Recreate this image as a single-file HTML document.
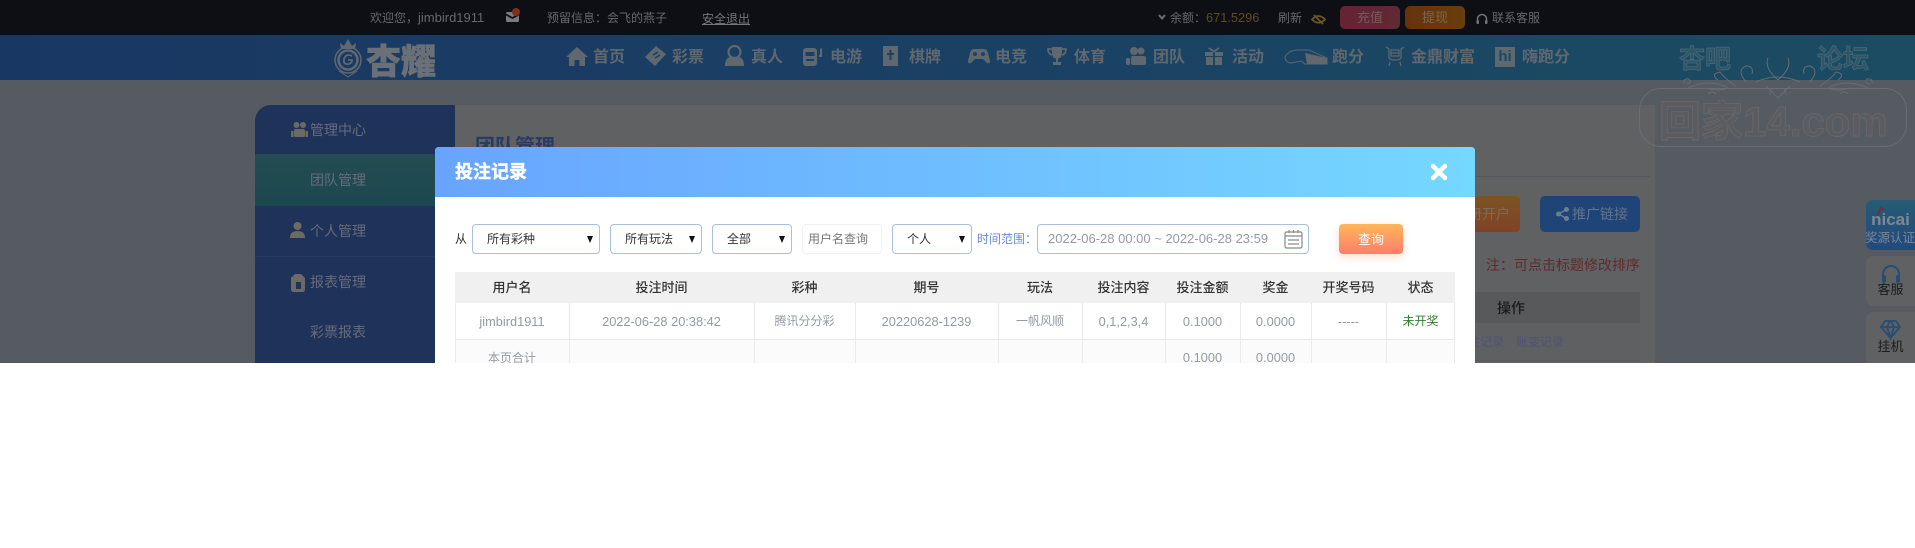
<!DOCTYPE html>
<html lang="zh"><head><meta charset="utf-8"><title>投注记录</title>
<style>
html,body{margin:0;padding:0;background:#fff}
#v{position:relative;width:1915px;height:548px;overflow:hidden;background:#fff;font-family:"Liberation Sans","Noto Sans CJK SC",sans-serif}
#c{position:absolute;left:0;top:0;width:1915px;height:363px;overflow:hidden;background:#565a61}
.a{position:absolute;white-space:nowrap}
.t{position:absolute;white-space:nowrap;line-height:20px}
svg{position:absolute;overflow:visible}
.n{position:absolute;top:46px;font-size:16px;font-weight:700;line-height:24px;color:#5f676f;white-space:nowrap}
.s{position:absolute;top:224px;height:28px;border:1px solid #a9bfdf;border-radius:4px;background:#fff;font-size:12px;line-height:28px;color:#333}
.ar{position:absolute;top:236px;width:0;height:0;border-left:3.5px solid transparent;border-right:3.5px solid transparent;border-top:7px solid #111}
.th{position:absolute;top:272px;height:31px;line-height:31px;text-align:center;font-size:13px;font-weight:500;color:#333}
.td{position:absolute;top:303px;height:36px;line-height:37px;text-align:center;font-size:12px;color:#969aa3}
.td2{position:absolute;top:340px;height:36px;line-height:36px;text-align:center;font-size:12px;color:#969aa3}
.l{font-size:12.8px}
.vl{position:absolute;top:303px;height:60px;width:1px;background:#e8eaee}
.m{position:absolute;font-size:14px;color:#666c7a;text-align:left}
</style></head><body><div id="v"><div id="c">
<!-- top bar -->
<div class="a" style="left:0;top:0;width:1915px;height:35px;background:#0d0f15"></div>
<div class="t" style="left:370px;top:8px;font-size:12px;color:#66686d">欢迎您，<span style="font-size:13px">jimbird1911</span></div>
<svg style="left:506px;top:12px" width="13" height="10" viewBox="0 0 13 10"><path d="M0 1.500 Q0 0 1.500 0H11.500Q13 0 13 1.500L6.500 5ZM0 3.500L6.500 7L13 3.500V8.500Q13 10 11.500 10H1.500Q0 10 0 8.500Z" fill="#7a7b80"/></svg>
<div class="a" style="left:512px;top:8px;width:8px;height:8px;border-radius:50%;background:#803019"></div>
<div class="t" style="left:547px;top:8px;font-size:12px;color:#66686d">预留信息：会飞的燕子</div>
<div class="t" style="left:702px;top:9px;font-size:12px;color:#76777c;text-decoration:underline">安全退出</div>
<svg style="left:1158px;top:14px" width="8" height="6" viewBox="0 0 8 6"><path d="M1 1L4 4.500L7 1" fill="none" stroke="#6c6e73" stroke-width="2"/></svg>
<div class="t" style="left:1170px;top:8px;font-size:12px;color:#66686d">余额：</div>
<div class="t l" style="left:1206px;top:8px;color:#5e4b26">671.5296</div>
<div class="t" style="left:1278px;top:8px;font-size:12px;color:#66686d">刷新</div>
<svg style="left:1311px;top:14px" width="15" height="11" viewBox="0 0 15 11"><path d="M1 5.500Q7.500-1.500 14 5.500Q7.500 12 1 5.500ZM3 1L12 10" fill="none" stroke="#6c5722" stroke-width="1.800"/></svg>
<div class="a" style="left:1340px;top:6px;width:60px;height:23px;border-radius:5px;background:linear-gradient(90deg,#652334,#5f2a33);font-size:13px;line-height:24px;text-align:center;color:#745a60">充值</div>
<div class="a" style="left:1405px;top:6px;width:60px;height:23px;border-radius:5px;background:linear-gradient(90deg,#67320c,#683e0d);font-size:13px;line-height:24px;text-align:center;color:#7c6650">提现</div>
<svg style="left:1476px;top:13px" width="12" height="12" viewBox="0 0 12 12"><path d="M1.500 10V6A4.500 4.500 0 0 1 10.500 6V10" fill="none" stroke="#727378" stroke-width="1.500"/><rect x="0.500" y="7" width="2.500" height="4" rx="1" fill="#727378"/><rect x="9" y="7" width="2.500" height="4" rx="1" fill="#727378"/></svg>
<div class="t" style="left:1492px;top:8px;font-size:12px;color:#66686d">联系客服</div>
<!-- nav -->
<div class="a" style="left:0;top:35px;width:1915px;height:45px;background:linear-gradient(90deg,#193763 0%,#1a3f64 45%,#1b4c62 100%)"></div>
<svg style="left:333px;top:38px" width="30" height="40" viewBox="0 0 30 40"><path d="M8 11L7 5L11 8L15 1L19 8L23 5L22 11Z" fill="#62686f"/><circle cx="15" cy="22" r="13" fill="none" stroke="#62686f" stroke-width="1.500"/><circle cx="15" cy="22" r="9.500" fill="none" stroke="#62686f" stroke-width="2.500"/><path d="M19 18Q13 15 11 21Q10 27 16 26Q19 25 19 22H15" fill="none" stroke="#62686f" stroke-width="1.800"/><path d="M6 33L15 39L24 33" fill="none" stroke="#62686f" stroke-width="1"/></svg>
<div class="a" style="left:366px;top:40px;font-size:35px;line-height:40px;font-weight:900;color:#6a7076;font-family:'Noto Sans CJK SC',sans-serif;-webkit-text-stroke:.6px #6a7076">杏耀</div>
<svg style="left:566px;top:47px" width="22" height="19" viewBox="0 0 22 19"><path d="M11 0L22 10H19V19H13.500V13H8.500V19H3V10H0Z" fill="#5f676f"/></svg><div class="n" style="left:593px">首页</div>
<svg style="left:645px;top:46px" width="21" height="20" viewBox="0 0 21 20"><path d="M11 0L21 8L10 20L0 11Z" fill="#5f676f"/><path d="M8 9L13 6M10 12L15 9" stroke="#1a3c64" stroke-width="1.500"/></svg><div class="n" style="left:672px">彩票</div>
<svg style="left:724px;top:45px" width="21" height="21" viewBox="0 0 21 21"><circle cx="10.500" cy="7" r="6" fill="none" stroke="#5f676f" stroke-width="2.200"/><path d="M1 21Q1 13 6 12Q10.500 16 15 12Q20 13 20 21Z" fill="#5f676f"/></svg><div class="n" style="left:751px">真人</div>
<svg style="left:803px;top:47px" width="20" height="19" viewBox="0 0 20 19"><rect x="0" y="1" width="14" height="18" rx="3" fill="#5f676f"/><rect x="2.500" y="5" width="9" height="4" fill="#1a4064"/><rect x="3" y="12" width="8" height="2" fill="#1a4064"/><path d="M16 9H18V1.500" fill="none" stroke="#5f676f" stroke-width="2"/></svg><div class="n" style="left:830px">电游</div>
<svg style="left:883px;top:46px" width="15" height="20" viewBox="0 0 15 20"><rect width="15" height="20" fill="#5f676f"/><path d="M7.500 4V14M4 8H11" stroke="#1a4264" stroke-width="2"/></svg><div class="n" style="left:909px">棋牌</div>
<svg style="left:968px;top:49px" width="22" height="15" viewBox="0 0 22 15"><path d="M6 0H16Q19 0 20 4L22 12Q22 15 19 14L15 10H7L3 14Q0 15 0 12L2 4Q3 0 6 0Z" fill="#5f676f"/><circle cx="7" cy="5" r="2" fill="#1a4364"/><circle cx="15" cy="5" r="2" fill="#1a4364"/></svg><div class="n" style="left:995px">电竞</div>
<svg style="left:1047px;top:47px" width="20" height="18" viewBox="0 0 20 18"><path d="M5 0H15V6Q15 11 11 11.500V15H14V18H6V15H9V11.500Q5 11 5 6Z" fill="#5f676f"/><path d="M5 2H1Q1 7 5 8M15 2H19Q19 7 15 8" fill="none" stroke="#5f676f" stroke-width="1.800"/></svg><div class="n" style="left:1074px">体育</div>
<svg style="left:1126px;top:47px" width="21" height="18" viewBox="0 0 21 18"><circle cx="8" cy="4" r="4" fill="#5f676f"/><circle cx="15" cy="4" r="3.500" fill="#5f676f"/><rect x="5" y="9" width="15" height="9" rx="2" fill="#5f676f"/><rect x="0" y="11" width="4" height="7" rx="1.500" fill="#5f676f"/></svg><div class="n" style="left:1153px">团队</div>
<svg style="left:1205px;top:48px" width="18" height="17" viewBox="0 0 18 17"><rect y="4" width="18" height="4" fill="#5f676f"/><rect x="1" y="9" width="16" height="8" fill="#5f676f"/><path d="M4 0L9 3.500L14 0" fill="none" stroke="#5f676f" stroke-width="1.800"/><rect x="8" y="4" width="2" height="13" fill="#1b4763"/></svg><div class="n" style="left:1232px">活动</div>
<svg style="left:1283px;top:49px" width="44" height="16" viewBox="0 0 44 16"><path d="M2 8Q6 1 15 1H26L44 9V15H22L18 12L8 14Q2 13 2 8Z" fill="none" stroke="#50626d" stroke-width="1.200"/><path d="M22 4L44 9V15H24Z" fill="#62676d"/></svg><div class="n" style="left:1332px">跑分</div>
<svg style="left:1385px;top:47px" width="20" height="19" viewBox="0 0 20 19"><path d="M1 0L4 2V10Q4 13 10 13Q16 13 16 10V2L19 0M6 3H14V9H6ZM6 6H14M5 15L4 19M15 15L16 19" fill="none" stroke="#5f676f" stroke-width="1.300"/></svg><div class="n" style="left:1411px">金鼎财富</div>
<div class="a" style="left:1495px;top:47px;width:20px;height:20px;background:#5f676f;color:#1b4a62;font-size:15px;font-weight:700;line-height:20px;text-align:center">hi</div><div class="n" style="left:1522px">嗨跑分</div>
<!-- main -->
<div class="a" style="left:455px;top:105px;width:1200px;height:258px;background:#606163"></div>
<div class="a" style="left:1475px;top:176px;width:175px;height:1px;background:#55575b"></div>
<div class="a" style="left:255px;top:105px;width:200px;height:258px;background:#1f3259;border-radius:16px 0 0 0"></div>
<div class="a" style="left:255px;top:154px;width:200px;height:52px;background:linear-gradient(180deg,#234c50,#1c4851)"></div>
<div class="a" style="left:255px;top:256px;width:200px;height:1px;background:#263a62"></div>
<svg style="left:291px;top:122px" width="17" height="15" viewBox="0 0 17 15"><circle cx="5.500" cy="3" r="3" fill="#6c6a65"/><circle cx="12" cy="3" r="3" fill="#6c6a65"/><rect x="3" y="7" width="11" height="8" rx="1.500" fill="#6c6a65"/><rect x="0" y="9" width="2.500" height="6" fill="#6c6a65"/><rect x="14.500" y="9" width="2.500" height="6" fill="#6c6a65"/></svg>
<div class="t m" style="left:310px;top:120px">管理中心</div>
<div class="t m" style="left:310px;top:170px">团队管理</div>
<svg style="left:290px;top:222px" width="15" height="16" viewBox="0 0 15 16"><circle cx="7.500" cy="4" r="4" fill="#6c6a65"/><path d="M0 16Q0 9 7.500 9Q15 9 15 16Z" fill="#6c6a65"/></svg>
<div class="t m" style="left:310px;top:221px">个人管理</div>
<svg style="left:291px;top:274px" width="14" height="18" viewBox="0 0 14 18"><path d="M4 0H10L14 4V15Q14 18 11 18H3Q0 18 0 15V4Z" fill="#6c6a65"/><rect x="5" y="8" width="5" height="7" fill="#1f3259"/></svg>
<div class="t m" style="left:310px;top:272px">报表管理</div>
<div class="t m" style="left:310px;top:322px">彩票报表</div>
<div class="a" style="left:475px;top:134px;font-size:20px;line-height:26px;font-weight:700;color:#283a66">团队管理</div>
<div class="a" style="left:1465px;top:196px;width:55px;height:36px;border-radius:4px;background:linear-gradient(180deg,#7d5424,#804226);font-size:14px;line-height:36px;color:#776b62;text-align:right;padding-right:10px;box-sizing:border-box">册开户</div>
<div class="a" style="left:1540px;top:196px;width:100px;height:36px;border-radius:5px;background:#1f4578;font-size:14px;line-height:36px;color:#647388;padding-left:32px;box-sizing:border-box">推广链接</div>
<svg style="left:1556px;top:207px" width="13" height="14" viewBox="0 0 13 14"><circle cx="2.500" cy="7" r="2.500" fill="#6e7d92"/><circle cx="10.500" cy="2.500" r="2.500" fill="#6e7d92"/><circle cx="10.500" cy="11.500" r="2.500" fill="#6e7d92"/><path d="M2.500 7L10.500 2.500M2.500 7L10.500 11.500" stroke="#6e7d92" stroke-width="1.300"/></svg>
<div class="t" style="left:1486px;top:255px;font-size:14px;color:#5e2b2d">注：可点击标题修改排序</div>
<div class="a" style="left:1475px;top:292px;width:165px;height:31px;background:#58595b"></div>
<div class="a" style="left:1475px;top:323px;width:165px;height:37px;background:#5f6062;border-bottom:1px solid #58595b"></div>
<div class="t" style="left:1497px;top:298px;font-size:14px;font-weight:500;color:#1a1a1c">操作</div>
<div class="t" style="left:1468px;top:332px;font-size:12px;color:#4d5475">注记录</div>
<div class="t" style="left:1516px;top:332px;font-size:12px;color:#4d5475">账变记录</div>
<!-- watermark -->
<div class="a" style="left:1679px;top:42px;font-size:26px;line-height:34px;font-weight:700;color:#2f5668;-webkit-text-stroke:.7px #4a6a78">杏吧</div>
<div class="a" style="left:1817px;top:42px;font-size:26px;line-height:34px;font-weight:700;color:#2f5668;-webkit-text-stroke:.7px #4a6a78">论坛</div>
<svg style="left:1680px;top:58px" width="200" height="44" viewBox="0 0 200 44" fill="none" stroke="#666e74" stroke-width="1"><path d="M4 26Q3 20 9 21Q12 25 7 26M8 30Q30 20 48 30Q38 34 26 30M192 26Q193 20 187 21Q184 25 189 26M188 30Q166 20 148 30Q158 34 170 30M38 22Q30 16 40 14Q44 20 56 28M158 22Q166 16 156 14Q152 20 140 28M66 24Q56 12 66 8Q74 8 72 16M130 24Q140 12 130 8Q122 8 124 16M98 22Q84 10 88 0M98 22Q112 10 108 0M76 24Q98 14 120 24M86 28L98 40L110 28M92 30L90 37M104 30L106 37M28 36Q32 32 36 36M168 36Q164 32 160 36"/></svg>
<div class="a" style="left:1639px;top:88px;width:266px;height:57px;border:1.500px solid #6a6d72;border-radius:22px"></div>
<div class="a" style="left:1659px;top:97px;font-size:42px;line-height:50px;font-weight:700;color:#5a5c60;-webkit-text-stroke:.8px #68696c">回家14.com</div>
<!-- floats -->
<div class="a" style="left:1866px;top:200px;width:49px;height:50px;border-radius:7px 0 0 7px;background:linear-gradient(180deg,#255c74,#23497e);text-align:center;overflow:hidden"><div style="font-size:17px;font-weight:700;line-height:20px;margin-top:10px;color:#7e8893">nicai</div><div style="font-size:12.500px;line-height:16px;color:#7d8694;white-space:nowrap;margin-left:-1px">奖源认证</div></div>
<svg style="left:1876px;top:207px" width="10" height="10" viewBox="0 0 10 10"><path d="M1 9L5 1L8 3" fill="none" stroke="#7a2a38" stroke-width="1.800"/></svg>
<div class="a" style="left:1866px;top:256px;width:49px;height:50px;border-radius:7px 0 0 7px;background:#606163;text-align:center"><div style="font-size:13px;line-height:16px;margin-top:26px;color:#1a1b1d">客服</div></div>
<svg style="left:1881px;top:264px" width="20" height="20" viewBox="0 0 20 20"><path d="M2 14V10A8 8 0 0 1 18 10V14" fill="none" stroke="#264d73" stroke-width="2"/><rect x="1" y="11" width="4" height="8" rx="2" fill="#264d73"/><rect x="15" y="11" width="4" height="8" rx="2" fill="#264d73"/></svg>
<div class="a" style="left:1866px;top:312px;width:49px;height:51px;border-radius:7px 0 0 0;background:#606163;text-align:center"><div style="font-size:13px;line-height:16px;margin-top:27px;color:#1a1b1d">挂机</div></div>
<svg style="left:1880px;top:320px" width="21" height="19" viewBox="0 0 21 19"><path d="M5 1H16L20 7L10.500 18L1 7ZM1 7H20M7 7L10.500 18L14 7L11 1M7 7L10 1" fill="none" stroke="#264d73" stroke-width="1.800"/></svg>
<!-- modal -->
<div class="a" style="left:435px;top:147px;width:1040px;height:230px;background:#fff;border-radius:4px 4px 0 0"></div>
<div class="a" style="left:435px;top:147px;width:1040px;height:50px;border-radius:4px 4px 0 0;background:linear-gradient(90deg,#68a4ff,#75d8ff)"></div>
<div class="a" style="left:455px;top:158px;font-size:18px;line-height:28px;font-weight:700;color:#fff;-webkit-text-stroke:.4px #fff">投注记录</div>
<svg style="left:1430px;top:163px" width="18" height="18" viewBox="0 0 18 18"><path d="M3 3L15 15M15 3L3 15" stroke="#fff" stroke-width="4.500" stroke-linecap="round"/></svg>
<div class="t" style="left:455px;top:229px;font-size:12px;color:#333">从</div>
<div class="s" style="left:472px;width:126px"><span style="position:absolute;left:14px">所有彩种</span></div><div class="ar" style="left:587px"></div>
<div class="s" style="left:610px;width:90px"><span style="position:absolute;left:14px">所有玩法</span></div><div class="ar" style="left:689px"></div>
<div class="s" style="left:712px;width:78px"><span style="position:absolute;left:14px">全部</span></div><div class="ar" style="left:779px"></div>
<div class="s" style="left:802px;width:78px;border-color:#f0f1f4;color:#777"><span style="position:absolute;left:5px">用户名查询</span></div>
<div class="s" style="left:892px;width:78px"><span style="position:absolute;left:14px">个人</span></div><div class="ar" style="left:959px"></div>
<div class="t" style="left:977px;top:229px;font-size:12px;color:#6c8ad0">时间范围：</div>
<div class="s" style="left:1037px;width:270px;color:#969aa3;font-size:13px"><span style="position:absolute;left:10px;white-space:nowrap">2022-06-28 00:00 ~ 2022-06-28 23:59</span></div>
<svg style="left:1284px;top:229px" width="19" height="20" viewBox="0 0 19 20"><rect x="1" y="3" width="17" height="16" rx="1.500" fill="none" stroke="#8a8a8a" stroke-width="1.200"/><path d="M1 7H18M4 11H15M4 15H15M5 1V4M9.500 1V4M14 1V4" stroke="#8a8a8a" stroke-width="1.200" fill="none"/></svg>
<div class="a" style="left:1339px;top:224px;width:64px;height:30px;border-radius:4px;background:linear-gradient(180deg,#ffb65a,#ff7d6b);box-shadow:0 3px 8px rgba(255,140,90,.3);font-size:13px;line-height:32px;color:#fff;text-align:center">查询</div>
<div class="a" style="left:455px;top:272px;width:1000px;height:31px;background:#f0f0f0"></div>
<div class="a" style="left:455px;top:339px;width:1000px;height:24px;background:#fbfbfc"></div>
<div class="a" style="left:455px;top:339px;width:1000px;height:1px;background:#e8eaee"></div>
<div class="vl" style="left:455px"></div><div class="vl" style="left:569px"></div><div class="vl" style="left:754px"></div><div class="vl" style="left:855px"></div><div class="vl" style="left:998px"></div><div class="vl" style="left:1082px"></div><div class="vl" style="left:1165px"></div><div class="vl" style="left:1240px"></div><div class="vl" style="left:1311px"></div><div class="vl" style="left:1386px"></div><div class="vl" style="left:1454px"></div>
<div class="th" style="left:455px;width:114px">用户名</div><div class="th" style="left:569px;width:185px">投注时间</div><div class="th" style="left:754px;width:101px">彩种</div><div class="th" style="left:855px;width:143px">期号</div><div class="th" style="left:998px;width:84px">玩法</div><div class="th" style="left:1082px;width:83px">投注内容</div><div class="th" style="left:1165px;width:75px">投注金额</div><div class="th" style="left:1240px;width:71px">奖金</div><div class="th" style="left:1311px;width:75px">开奖号码</div><div class="th" style="left:1386px;width:69px">状态</div>
<div class="td l" style="left:455px;width:114px">jimbird1911</div><div class="td l" style="left:569px;width:185px">2022-06-28 20:38:42</div><div class="td" style="left:754px;width:101px">腾讯分分彩</div><div class="td l" style="left:855px;width:143px">20220628-1239</div><div class="td" style="left:998px;width:84px">一帆风顺</div><div class="td l" style="left:1082px;width:83px">0,1,2,3,4</div><div class="td l" style="left:1165px;width:75px">0.1000</div><div class="td l" style="left:1240px;width:71px">0.0000</div><div class="td l" style="left:1311px;width:75px">-----</div><div class="td" style="left:1386px;width:69px;color:#2f7f2f">未开奖</div>
<div class="td2" style="left:455px;width:114px">本页合计</div><div class="td2 l" style="left:1165px;width:75px">0.1000</div><div class="td2 l" style="left:1240px;width:71px">0.0000</div>
</div></div></body></html>
